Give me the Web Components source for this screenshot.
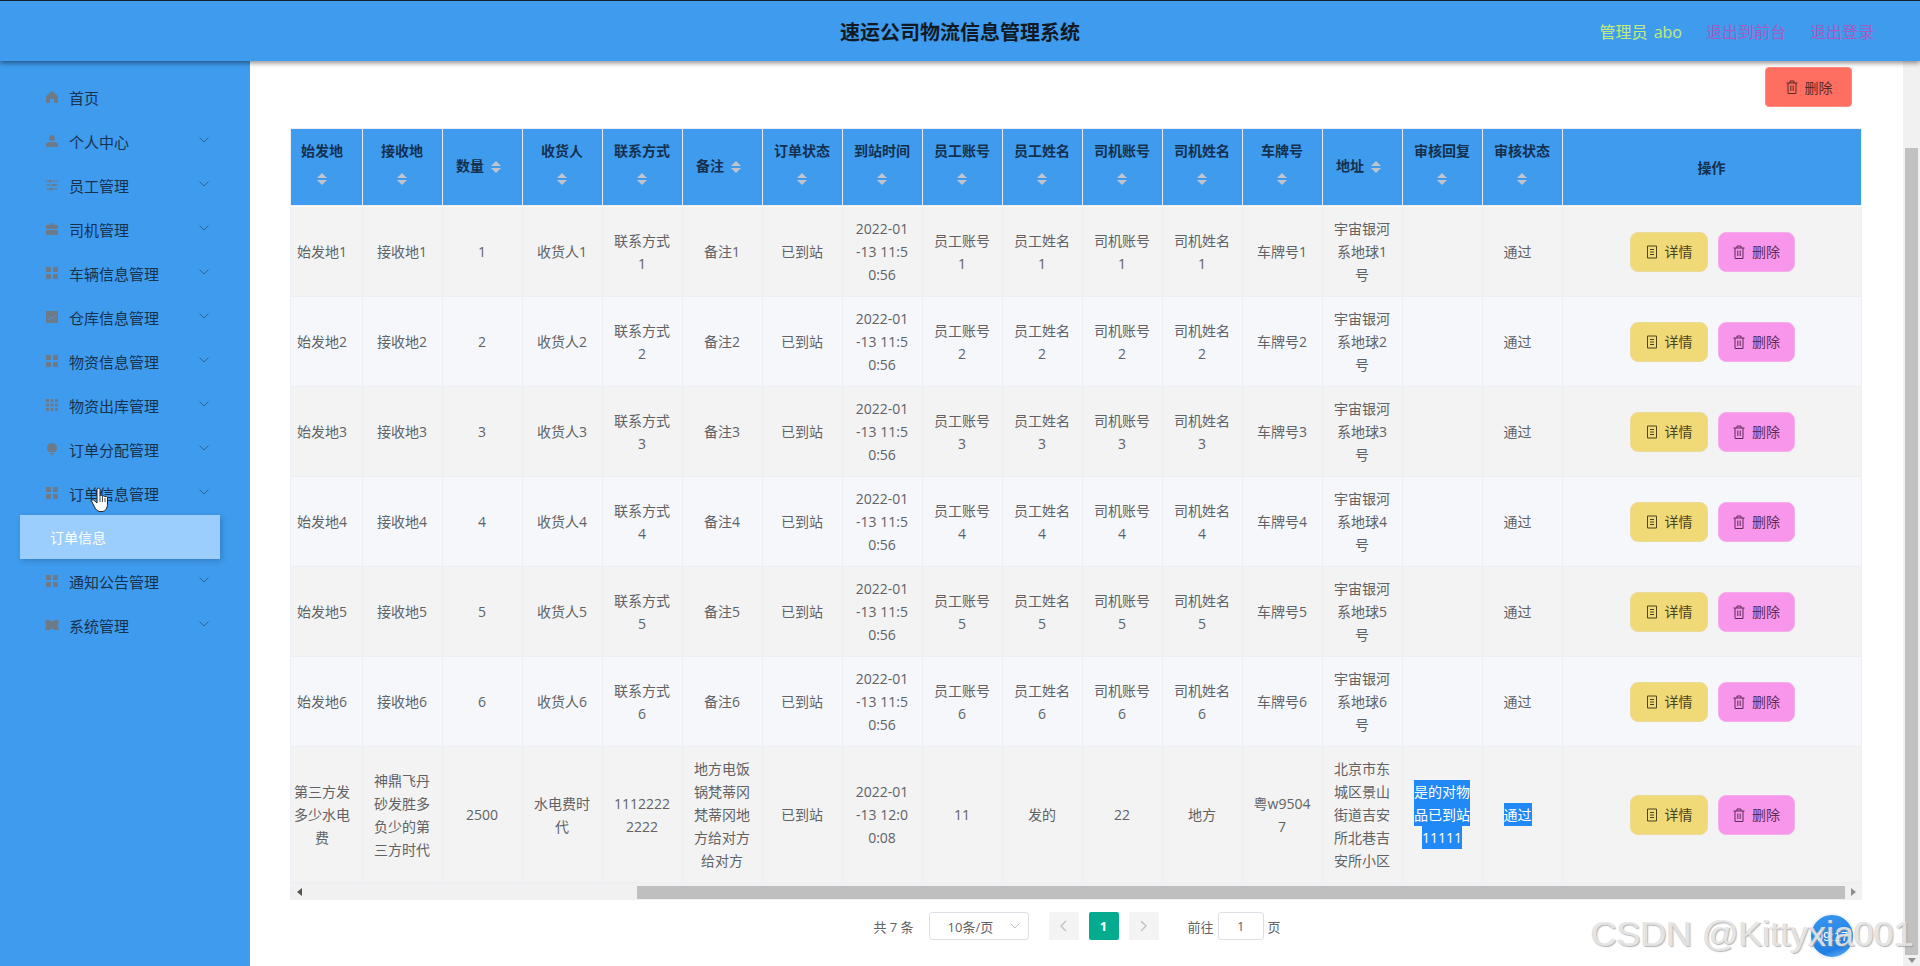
<!DOCTYPE html>
<html lang="zh">
<head>
<meta charset="utf-8">
<title>速运公司物流信息管理系统</title>
<style>
  html, body { margin: 0; height: 100%; overflow: hidden; background: #fff; }
  body { font-family: "Open Sans", "Noto Sans CJK SC", sans-serif; font-size: 14px; color: #606266; }
</style>
</head>
<body>
<admin-page>
  <top-bar slot="top" title="速运公司物流信息管理系统"></top-bar>
  <side-menu slot="side">
    <side-item icon="home" plain>首页</side-item>
    <side-item icon="user">个人中心</side-item>
    <side-item icon="sliders">员工管理</side-item>
    <side-item icon="case">司机管理</side-item>
    <side-item icon="grid">车辆信息管理</side-item>
    <side-item icon="chart">仓库信息管理</side-item>
    <side-item icon="grid">物资信息管理</side-item>
    <side-item icon="grid9">物资出库管理</side-item>
    <side-item icon="bulb">订单分配管理</side-item>
    <side-item icon="grid">订单信息管理</side-item>
    <side-subitem>订单信息</side-subitem>
    <side-item icon="grid">通知公告管理</side-item>
    <side-item icon="system">系统管理</side-item>
  </side-menu>
  <tool-row>
    <act-button kind="danger" icon="trash">删除</act-button>
  </tool-row>
  <data-table></data-table>
  <page-bar></page-bar>
</admin-page>
<screen-overlay></screen-overlay>

<script>
// ----- icones -----
const ICONS = {
  home: '<path d="M6 0 12 5v7H8V8H4v4H0V5z"/>',
  user: '<circle cx="6" cy="3" r="3"/><path d="M0 12V9.500C0 8 1.500 7 3 7h6c1.500 0 3 1 3 2.500V12z"/>',
  sliders: '<path d="M0 1.500h12v1H0zM0 5.500h12v1H0zM0 9.500h12v1H0z"/><circle cx="4" cy="2" r="1.500"/><circle cx="8" cy="6" r="1.500"/><circle cx="5" cy="10" r="1.500"/>',
  case: '<path d="M3.500 2V.5h5V2H12v4H0V2zM4.700 2h2.600v-.5H4.700zM0 7h12v5H0z"/>',
  grid: '<path d="M0 0h5v5H0zM7 0h5v5H7zM0 7h5v5H0zM7 7h5v5H7z"/>',
  grid9: '<path d="M0 0h3v3H0zM4.500 0h3v3h-3zM9 0h3v3H9zM0 4.500h3v3H0zM4.500 4.500h3v3h-3zM9 4.500h3v3H9zM0 9h3v3H0zM4.500 9h3v3h-3zM9 9h3v3H9z"/>',
  chart: '<path d="M0 0h12v12H0z"/><path d="M2 9l2.500-2.500 2 1L10 4" fill="none" stroke="#3f9bee" stroke-width=".8"/>',
  bulb: '<path d="M6 0a5 5 0 0 1 3 9H3A5 5 0 0 1 6 0zM3.800 10h4.400v1H3.800zM4.800 11.500h2.400V12.500H4.800z"/>',
  system: '<path d="M-1 1h4l3 1.500L9 1h4l-1 5 1 5H9L6 9.500 3 11h-4l1-5z"/>'
};

const BTN_ICONS = {
  doc: '<path fill="none" stroke="currentColor" d="M2.500 1h9v12h-9zM5 4.500h4M5 7h4M5 9.500h4"/>',
  trash: '<path fill="none" stroke="currentColor" d="M1.500 3h11M5 3V1h4v2M3 3v10.500h8V3M5.800 5.500v5.500M8.200 5.500v5.500"/>'
};

// ----- pagina -----
class AdminPage extends HTMLElement {
  constructor() {
    super();
    this.attachShadow({ mode: "open" }).innerHTML = `
      <style>
        :host { display: flex; flex-direction: column; height: 966px; }
        .mid { flex: 1; display: flex; min-height: 0; }
        .content { flex: 1; min-width: 0; display: flex; flex-direction: column; padding: 6px 41px 0 40px; background: #fff; }
        .vbar { width: 17px; background: #f1f1f1; display: flex; flex-direction: column; }
        .vbar i { display: block; height: 87px; flex: none; }
        .vbar b { display: block; margin: 0 2px; height: 807px; background: #c1c1c1; flex: none; }
        .vbar u { flex: 1; display: flex; align-items: center; justify-content: center; }
        .vbar u::after { content: ""; border: 4px solid transparent; border-top: 5px solid #8f8f8f; border-bottom: 0; }
      </style>
      <slot name="top"></slot>
      <div class="mid">
        <slot name="side"></slot>
        <div class="content"><slot></slot></div>
        <div class="vbar"><i></i><b></b><u></u></div>
      </div>
    `;
  }
}

class TopBar extends HTMLElement {
  constructor() {
    super();
    this.attachShadow({ mode: "open" }).innerHTML = `
      <style>
        :host {
          display: grid; grid-template-columns: 1fr auto 1fr; align-items: center;
          height: 61px; box-sizing: border-box; border-top: 1px solid #16202b;
          background: #3f9bee; box-shadow: 0 2px 5px rgba(0,0,0,.45);
          position: relative; z-index: 5;
        }
        .title { grid-column: 2; font-size: 20px; font-weight: 700; color: #111a24; line-height: 28px; margin-top: 3px; }
        .right { display: flex; justify-content: flex-end; gap: 24px; padding-right: 46px; font-size: 16px; line-height: 24px; margin-top: 2px; }
        .who { color: #c2ec7c; word-spacing: 2px; }
        .out { color: #a35bc2; }
      </style>
      <div class="title"></div>
      <div class="right">
        <span class="who">管理员 abo</span>
        <span class="out">退出到前台</span>
        <span class="out">退出登录</span>
      </div>
    `;
    this.shadowRoot.querySelector(".title").textContent = this.getAttribute("title");
  }
}

// ----- menu lateral -----
class SideMenu extends HTMLElement {
  constructor() {
    super();
    this.attachShadow({ mode: "open" }).innerHTML = `
      <style>
        :host { display: flex; flex-direction: column; width: 250px; flex: none; padding-top: 14px; box-sizing: border-box; background: #3f9bee; }
      </style>
      <slot></slot>
    `;
  }
}

class SideItem extends HTMLElement {
  constructor() {
    super();
    const arrow = this.hasAttribute("plain") ? "" :
      '<svg class="arrow" viewBox="0 0 10 6" width="10" height="6"><path d="M.5.5 5 5 9.500.5" fill="none" stroke="#2f6496" stroke-width="1"/></svg>';
    this.attachShadow({ mode: "open" }).innerHTML = `
      <style>
        :host { display: flex; align-items: center; height: 44px; padding-left: 46px; font-size: 15px; color: #17324f; position: relative; }
        .ic { width: 12px; height: 12px; fill: #6f7a88; flex: none; margin-right: 11px; overflow: visible; }
        .arrow { margin-left: auto; margin-right: 41px; margin-top: -2px; flex: none; }
      </style>
      <svg class="ic" viewBox="0 0 12 12">${ICONS[this.getAttribute("icon")]}</svg>
      <slot></slot>
      ${arrow}
    `;
  }
}

class SideSubitem extends HTMLElement {
  constructor() {
    super();
    this.attachShadow({ mode: "open" }).innerHTML = `
      <style>
        :host {
          display: flex; align-items: center; height: 44px; margin: 0 30px 0 20px; padding-left: 30px;
          font-size: 14px; color: #fff; background: #9bcdfd; box-shadow: 2px 2px 6px rgba(0,0,0,.18);
        }
      </style>
      <slot></slot>
    `;
  }
}

// ----- botoes -----
class ToolRow extends HTMLElement {
  constructor() {
    super();
    this.attachShadow({ mode: "open" }).innerHTML = `
      <style>
        :host { display: flex; justify-content: flex-end; padding-right: 10px; margin-bottom: 21px; }
      </style>
      <slot></slot>
    `;
  }
}

class ActButton extends HTMLElement {
  constructor() {
    super();
    this.attachShadow({ mode: "open" }).innerHTML = `
      <style>
        :host {
          display: inline-flex; align-items: center; justify-content: center; gap: 6px;
          height: 40px; box-sizing: border-box; font-size: 14px; color: #3a3a3a; border-radius: 8px; border: 1px solid;
        }
        :host([kind=danger]) { width: 87px; background: #ff6f61; border-color: #fb8a7e; border-radius: 4px; color: #5c2b27; }
        :host([kind=view]) { width: 78px; background: #f0d977; border-color: #eadb9a; color: #4b4320; }
        :host([kind=del]) { width: 77px; background: #f796ea; border-color: #f4aeea; color: #5d2b57; }
        svg { width: 14px; height: 14px; flex: none; }
      </style>
      <svg viewBox="0 0 14 14">${BTN_ICONS[this.getAttribute("icon")]}</svg>
      <slot></slot>
    `;
  }
}

// ----- tabela -----
const HEADS = ["始发地", "接收地", "数量", "收货人", "联系方式", "备注", "订单状态", "到站时间", "员工账号",
  "员工姓名", "司机账号", "司机姓名", "车牌号", "地址", "审核回复", "审核状态"];

function rowData(n) {
  return ["始发地" + n, "接收地" + n, "" + n, "收货人" + n, "联系方式\n" + n, "备注" + n, "已到站",
    "2022-01\n-13 11:5\n0:56", "员工账号\n" + n, "员工姓名\n" + n, "司机账号\n" + n, "司机姓名\n" + n,
    "车牌号" + n, "宇宙银河\n系地球" + n + "\n号", "", '<span class="off">通过</span>'];
}

const ROWS = [1, 2, 3, 4, 5, 6].map(rowData);
ROWS.push(["第三方发\n多少水电\n费", "神鼎飞丹\n砂发胜多\n负少的第\n三方时代", "2500", "水电费时\n代", "1112222\n2222",
  "地方电饭\n锅梵蒂冈\n梵蒂冈地\n方给对方\n给对方", "已到站", "2022-01\n-13 12:0\n0:08", "11", "发的", "22", "地方",
  "粤w9504\n7", "北京市东\n城区景山\n街道吉安\n所北巷吉\n安所小区",
  '<span class="sel">是的对物</span><span class="sel">品已到站</span><span class="sel">11111</span>',
  '<span class="off"><span class="sel">通过</span></span>']);

class DataTable extends HTMLElement {
  constructor() {
    super();
    const caret = '<span class="caret"><i></i><b></b></span>';
    let cells = HEADS.map(h => `<div class="th"><div>${h}${caret}</div></div>`).join("");
    cells += '<div class="th"><div>操作</div></div>';

    ROWS.forEach((row, r) => {
      const cls = r % 2 ? "td even" : "td";
      cells += row.map(v => `<div class="${cls}"><div>${v}</div></div>`).join("");
      cells += `<div class="${cls} ops"><act-button kind="view" icon="doc">详情</act-button><act-button kind="del" icon="trash">删除</act-button></div>`;
    });

    this.attachShadow({ mode: "open" }).innerHTML = `
      <style>
        :host { display: block; border-left: 1px solid #ebeef5; box-sizing: border-box; width: 1572px; overflow: hidden; }
        .grid { display: grid; grid-template-columns: repeat(16, 80px) 299px; margin-left: -8px; }
        .th, .td { display: flex; align-items: center; justify-content: center; box-sizing: border-box; padding: 10px 10px 10px 9px; text-align: center; line-height: 23px; }
        .th > div, .td > div { width: 60px; flex: none; }
        .th { height: 78px; background: #3f9bee; color: #14304f; font-weight: 700; border-right: 1px solid #ebeef5; border-top: 1px solid #ebeef5; border-bottom: 1px solid #ebeef5; padding: 9px 10px 9px 9px; margin-bottom: 1px; }
        .td { background: #f3f3f3; color: #606266; border-right: 1px solid #ebeef5; border-bottom: 1px solid #ebeef5; white-space: pre-line; }
        .td.even { background: #f5f7fb; }
        .ops { gap: 10px; padding: 0; }
        .off { display: block; padding-right: 9px; }
        .caret { display: inline-flex; flex-direction: column; align-items: center; justify-content: center; gap: 2px; width: 24px; height: 34px; vertical-align: middle; }
        .caret i, .caret b { display: block; width: 0; height: 0; border: 5px solid transparent; }
        .caret i { border-top: 0; border-bottom-color: #c0c4cc; }
        .caret b { border-bottom: 0; border-top-color: #c0c4cc; }
        .sel { display: block; width: fit-content; margin: 0 auto; background: #2189f5; color: #fff; }
        .hbar { display: flex; height: 17px; background: #f1f1f1; }
        .hbar .l, .hbar .r { width: 17px; flex: none; display: flex; align-items: center; justify-content: center; }
        .hbar .l::after { content: ""; border: 4px solid transparent; border-left: 0; border-right: 5px solid #555; }
        .hbar .r::after { content: ""; border: 4px solid transparent; border-right: 0; border-left: 5px solid #8f8f8f; }
        .hbar .gap { width: 329px; flex: none; }
        .hbar .thumb { flex: 1; margin: 3px 0 1px; background: #bfbfbf; }
      </style>
      <div class="grid">${cells}</div>
      <div class="hbar"><div class="l"></div><div class="gap"></div><div class="thumb"></div><div class="r"></div></div>
    `;
  }
}

// ----- paginacao -----
class PageBar extends HTMLElement {
  constructor() {
    super();
    this.attachShadow({ mode: "open" }).innerHTML = `
      <style>
        :host { display: flex; align-items: center; justify-content: center; margin-top: 12px; padding-left: 2px; height: 28px; width: 1572px; box-sizing: border-box; font-size: 13px; color: #606266; }
        .select { width: 100px; height: 28px; box-sizing: border-box; margin: 0 20px 0 15px; border: 1px solid #dcdfe6; border-radius: 3px; display: flex; align-items: center; padding-left: 18px; background: #fff; }
        .select svg { margin-left: auto; margin-right: 8px; }
        .btn { width: 30px; height: 28px; border-radius: 2px; background: #f4f4f5; display: flex; align-items: center; justify-content: center; margin-right: 10px; color: #c0c4cc; }
        .btn.on { background: #05ab8e; color: #fff; font-weight: 700; }
        .btn.last { margin-right: 29px; }
        .jump { width: 46px; height: 28px; box-sizing: border-box; margin: 0 4px; border: 1px solid #dcdfe6; border-radius: 3px; display: flex; align-items: center; justify-content: center; background: #fff; }
      </style>
      <span>共 7 条</span>
      <div class="select"><span>10条/页</span><svg width="10" height="6" viewBox="0 0 10 6"><path d="M.5.5 5 5 9.500.5" fill="none" stroke="#c0c4cc"/></svg></div>
      <div class="btn"><svg width="7" height="12" viewBox="0 0 7 12"><path d="M6 1 1 6l5 5" fill="none" stroke="currentColor" stroke-width="1.500"/></svg></div>
      <div class="btn on">1</div>
      <div class="btn last"><svg width="7" height="12" viewBox="0 0 7 12"><path d="m1 1 5 5-5 5" fill="none" stroke="currentColor" stroke-width="1.500"/></svg></div>
      <span>前往</span>
      <div class="jump">1</div>
      <span>页</span>
    `;
  }
}

// ----- por cima de tudo: cursor, relogio e marca d'agua -----
class ScreenOverlay extends HTMLElement {
  constructor() {
    super();
    this.attachShadow({ mode: "open" }).innerHTML = `
      <style>
        :host { display: block; position: absolute; inset: 0; pointer-events: none; z-index: 9; overflow: hidden; }
        .hand { position: absolute; left: 91px; top: 487px; }
        .clock {
          position: absolute; left: 1809px; top: 913px; width: 46px; height: 46px; border-radius: 50%;
          border: 2px solid #eef5fc; box-sizing: border-box; background: linear-gradient(160deg, #3a97ee 0%, #1f7fe6 75%, #7bbcf4 100%);
          color: #fff; font: 13px/44px "Liberation Sans", sans-serif; text-align: center;
        }
        .mark {
          position: absolute; left: 1591px; top: 914px; font: 35.800px/40px "Liberation Sans", sans-serif; white-space: nowrap;
          color: rgba(240,240,240,.8); text-shadow: 1px 1px 1px rgba(150,150,150,.7), -1px 0 0 rgba(190,190,190,.5);
        }
      </style>
      <svg class="hand" width="20" height="26" viewBox="0 0 20 26">
        <path d="M6 2c1-1.500 2.800-1 3 .5V9c0-1 2.500-1 2.500.5 0-1 2.500-1 2.500.5 .3-1 2.500-.8 2.500 1V17c0 4-2 7.500-5.500 7.500H9C6 24.500 4.500 22 3 19L.8 14.500c-.6-1.500 1.200-2.500 2.200-1.200L6 16z" fill="#fff" stroke="#222" stroke-width="1"/>
        <path d="M9 9v6M11.500 10v5M14 11v4" stroke="#222" stroke-width=".8"/>
      </svg>
      <div class="clock">09:17</div>
      <div class="mark">CSDN @Kittyxia001</div>
    `;
  }
}

customElements.define("admin-page", AdminPage);
customElements.define("top-bar", TopBar);
customElements.define("side-menu", SideMenu);
customElements.define("side-item", SideItem);
customElements.define("side-subitem", SideSubitem);
customElements.define("tool-row", ToolRow);
customElements.define("act-button", ActButton);
customElements.define("data-table", DataTable);
customElements.define("page-bar", PageBar);
customElements.define("screen-overlay", ScreenOverlay);
</script>
</body>
</html>
